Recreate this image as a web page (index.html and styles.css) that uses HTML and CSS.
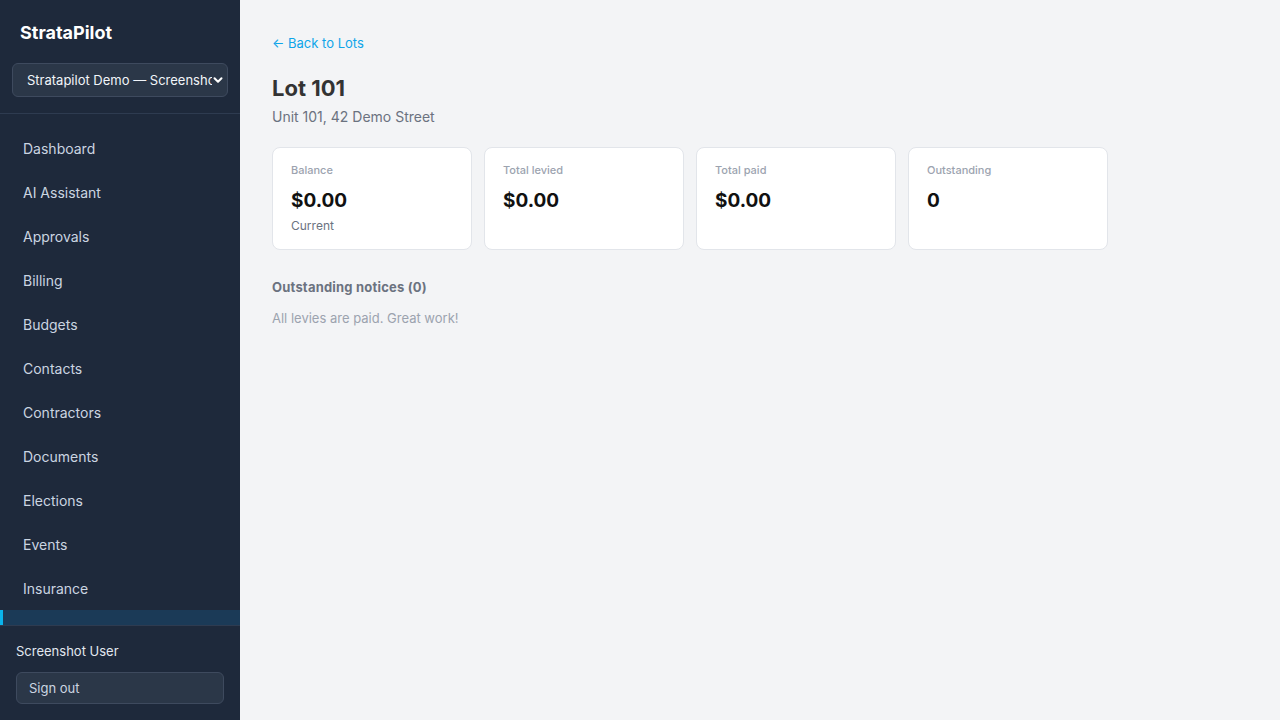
FILE: index.html
```html
<!DOCTYPE html>
<html lang="en">
<head>
    <meta charset="UTF-8">
    <meta name="viewport" content="width=device-width, initial-scale=1.0">
    <title>Lot 101 - StrataPilot</title>
    <link rel="stylesheet" href="styles.css">
</head>
<body>

    <!-- Sidebar -->
    <aside class="sidebar">
        <div class="brand">StrataPilot</div>
        <div class="org-picker">
            <div class="org-select">
                <span class="org-name">Stratapilot Demo — Screenshot Scheme</span>
                <svg class="chevron" width="10" height="10" viewBox="0 0 10 10">
                    <path d="M1.5 3.2 L5 6.7 L8.5 3.2" fill="none" stroke="#ffffff" stroke-width="2" stroke-linecap="round" stroke-linejoin="round"/>
                </svg>
            </div>
        </div>

        <nav class="nav">
            <a class="nav-item" href="#">Dashboard</a>
            <a class="nav-item" href="#">AI Assistant</a>
            <a class="nav-item" href="#">Approvals</a>
            <a class="nav-item" href="#">Billing</a>
            <a class="nav-item" href="#">Budgets</a>
            <a class="nav-item" href="#">Contacts</a>
            <a class="nav-item" href="#">Contractors</a>
            <a class="nav-item" href="#">Documents</a>
            <a class="nav-item" href="#">Elections</a>
            <a class="nav-item" href="#">Events</a>
            <a class="nav-item" href="#">Insurance</a>
            <a class="nav-item active" href="#">Lots</a>
            <a class="nav-item" href="#">Maintenance</a>
            <a class="nav-item" href="#">Meetings</a>
        </nav>

        <div class="user-box">
            <div class="user-name">Screenshot User</div>
            <button class="sign-out">Sign out</button>
        </div>
    </aside>

    <!-- Main content -->
    <main class="main">
        <a class="back-link" href="#">← Back to Lots</a>
        <h1 class="page-title">Lot 101</h1>
        <div class="page-subtitle">Unit 101, 42 Demo Street</div>

        <div class="stats">
            <div class="stat-card">
                <div class="stat-label">Balance</div>
                <div class="stat-value">$0.00</div>
                <div class="stat-note">Current</div>
            </div>
            <div class="stat-card">
                <div class="stat-label">Total levied</div>
                <div class="stat-value">$0.00</div>
            </div>
            <div class="stat-card">
                <div class="stat-label">Total paid</div>
                <div class="stat-value">$0.00</div>
            </div>
            <div class="stat-card">
                <div class="stat-label">Outstanding</div>
                <div class="stat-value">0</div>
            </div>
        </div>

        <h2 class="section-title">Outstanding notices (0)</h2>
        <p class="empty-text">All levies are paid. Great work!</p>
    </main>

</body>
</html>
```

FILE: styles.css
```css
* {
    box-sizing: border-box;
}
body {
    margin: 0;
    height: 100vh;
    display: flex;
    background-color: #f3f4f6;
    font-family: 'Inter', 'Noto Sans', sans-serif;
    overflow: hidden;
}

/* Sidebar */
.sidebar {
    width: 240px;
    flex-shrink: 0;
    height: 100vh;
    background-color: #1e293b;
    display: flex;
    flex-direction: column;
}
.brand {
    padding: 21px 20px 0;
    font-size: 18px;
    line-height: 24px;
    font-weight: 700;
    color: #ffffff;
}
.org-picker {
    padding: 18px 12px 16px;
    border-bottom: 1px solid #2e3b50;
}
.org-select {
    height: 34px;
    display: flex;
    align-items: center;
    padding: 0 4px 0 14px;
    background-color: #2b3748;
    border: 1px solid #3e4a5e;
    border-radius: 6px;
    color: #f1f5f9;
    font-size: 13px;
}
.org-name {
    flex: 1;
    overflow: hidden;
    white-space: nowrap;
}
.chevron {
    flex-shrink: 0;
    margin-left: 1px;
}
.nav {
    flex: 1;
    overflow: hidden;
    padding-top: 12px;
    display: flex;
    flex-direction: column;
}
.nav-item {
    flex-shrink: 0;
    height: 44px;
    display: flex;
    align-items: center;
    padding-left: 20px;
    font-size: 14px;
    color: #cbd5e1;
    text-decoration: none;
    border-left: 3px solid transparent;
}
.nav-item.active {
    background-color: #1b3a57;
    border-left-color: #0ab4ec;
    color: #ffffff;
}
.user-box {
    border-top: 1px solid #2e3b50;
    padding: 16px;
}
.user-name {
    font-size: 13px;
    line-height: 18px;
    color: #e2e8f0;
}
.sign-out {
    display: block;
    width: 100%;
    height: 32px;
    margin-top: 12px;
    padding: 0 12px;
    text-align: left;
    font-family: inherit;
    font-size: 13px;
    color: #cbd5e1;
    background-color: #2b3748;
    border: 1px solid #3e4a5e;
    border-radius: 6px;
    cursor: pointer;
}

/* Main */
.main {
    flex: 1;
    padding: 34px 32px 32px;
}
.back-link {
    display: block;
    font-size: 13px;
    line-height: 18px;
    color: #0ea5e9;
    text-decoration: none;
}
.page-title {
    margin: 22px 0 0;
    font-size: 22px;
    line-height: 28px;
    font-weight: 700;
    color: #333333;
}
.page-subtitle {
    margin-top: 5px;
    font-size: 14px;
    line-height: 20px;
    color: #6b7280;
}
.stats {
    display: grid;
    grid-template-columns: repeat(4, 200px);
    gap: 12px;
    margin-top: 20px;
}
.stat-card {
    min-height: 103px;
    padding: 14px 18px;
    background-color: #ffffff;
    border: 1px solid #e2e5ea;
    border-radius: 8px;
}
.stat-label {
    font-size: 11px;
    line-height: 16px;
    font-weight: 500;
    color: #9ca3af;
}
.stat-value {
    margin-top: 10px;
    font-size: 19px;
    line-height: 26px;
    font-weight: 700;
    color: #111111;
}
.stat-note {
    margin-top: 4px;
    font-size: 12px;
    line-height: 16px;
    color: #6b7280;
}
.section-title {
    margin: 28px 0 0;
    font-size: 13px;
    line-height: 18px;
    font-weight: 700;
    letter-spacing: 0.2px;
    color: #6b7280;
}
.empty-text {
    margin: 13px 0 0;
    font-size: 13px;
    line-height: 18px;
    color: #9ca3af;
}
```
